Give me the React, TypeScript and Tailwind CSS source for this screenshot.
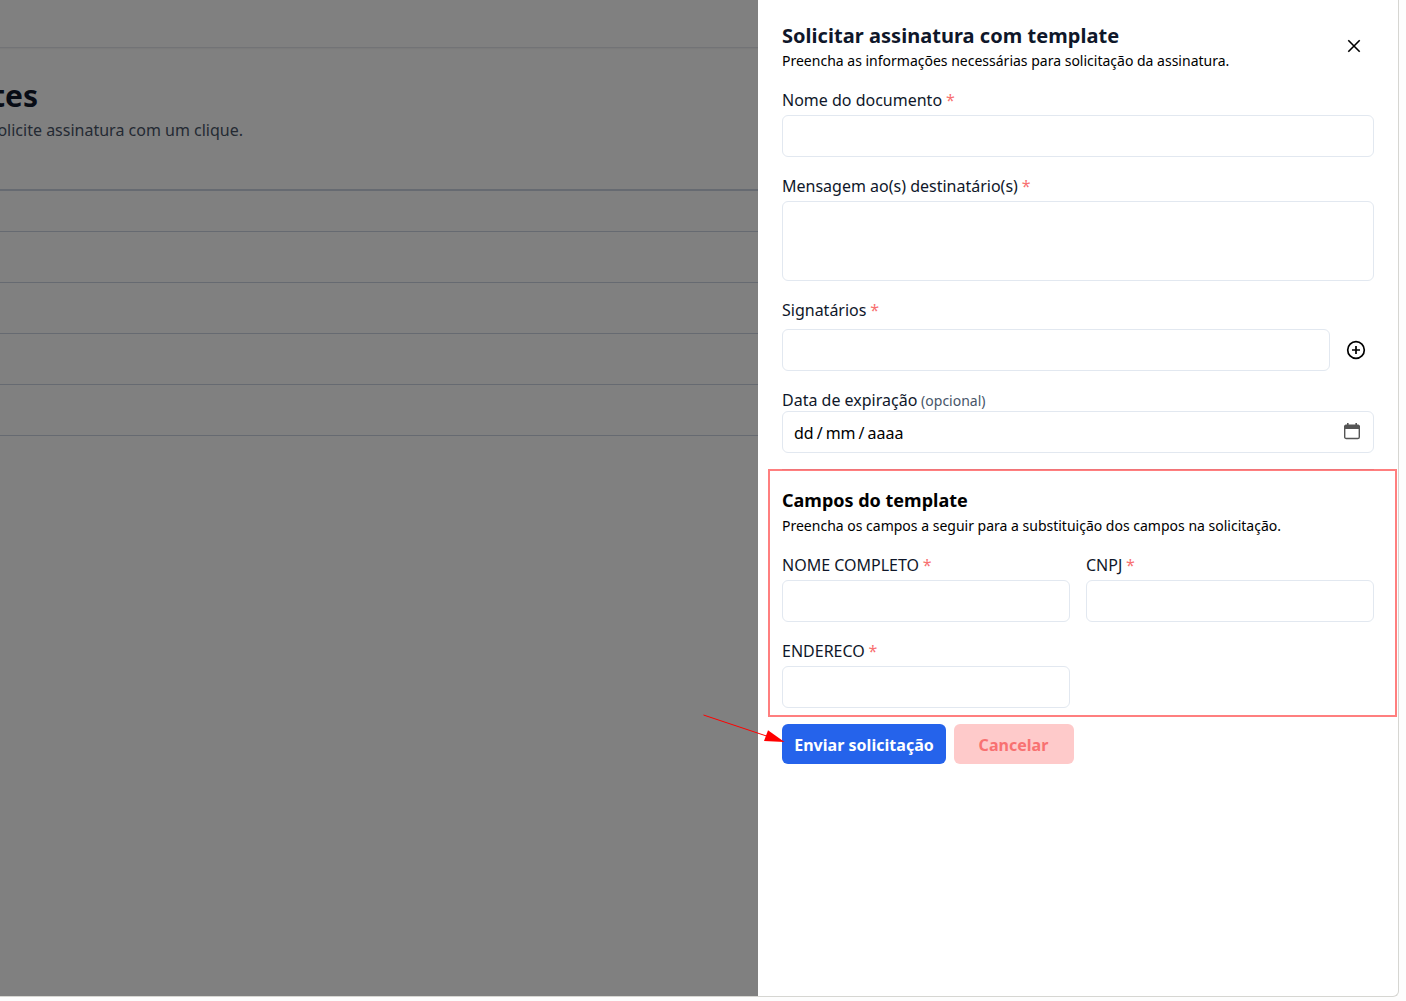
import React from 'react';

const inputBase = 'block w-full rounded-md border border-[#e2e8f0] bg-white outline-none';

function Label({ text }: { text: string }) {
  return (
    <label className="mb-[3px] block h-6 leading-6 text-[#0f172a]">
      {text} <span className="-ml-[0.4px] text-[#f87171]">*</span>
    </label>
  );
}

function Field({ text }: { text: string }) {
  return (
    <div>
      <Label text={text} />
      <input className={`${inputBase} h-[42px]`} />
    </div>
  );
}

function Background() {
  return (
    <div className="flex min-w-0 flex-1 flex-col overflow-hidden whitespace-nowrap bg-[#808080]">
      <div className="h-12 shrink-0 border-b border-[#727376] shadow-[0_1px_1px_rgba(0,0,0,0.04)]" />
      <div className="h-[141px] shrink-0 pt-[30px]">
        <div className="flex w-[38px] justify-end">
          <h1 className="text-[30px] font-bold leading-9 text-[#080c15]">tes</h1>
        </div>
        <div className="mt-1 flex w-[243px] justify-end">
          <p className="leading-6 text-[#242a33]">olicite assinatura com um clique.</p>
        </div>
      </div>
      <div className="h-[43px] shrink-0 border-b border-t-2 border-[#666a71]" />
      <div className="h-[51px] shrink-0 border-b border-[#666a71]" />
      <div className="h-[51px] shrink-0 border-b border-[#666a71]" />
      <div className="h-[51px] shrink-0 border-b border-[#666a71]" />
      <div className="h-[51px] shrink-0 border-b border-[#666a71]" />
    </div>
  );
}

function CalendarIcon() {
  return (
    <svg className="-mt-0.5" width="16" height="17" viewBox="0 0 16 17" fill="none" aria-hidden="true">
      <rect x="0.7" y="2.7" width="14.6" height="12.8" rx="1.6" stroke="#555" strokeWidth="1.4" />
      <path d="M1.5 1.5h13l1.5 1.5v3H0V3z" fill="#555" />
      <path d="M3 0h1.6v3H3zM11.4 0H13v3h-1.6z" fill="#555" />
    </svg>
  );
}

export default function App() {
  return (
    <div className="h-[1001px] w-[1406px] overflow-hidden bg-[#fdfdfd] font-['Noto_Sans',sans-serif] text-base text-black">
      <div className="flex h-[997px] w-[1399px] overflow-hidden rounded-br-md border-b border-r border-[#d6d6d2] bg-white">
        <Background />
        <aside className="w-[640px] shrink-0 px-6 pt-[22px]">
          <header className="flex h-[66px] items-start justify-between">
            <div>
              <h2 className="text-xl font-bold leading-7 tracking-[0.04px] text-[#0f172a]">Solicitar assinatura com template</h2>
              <p className="mt-px text-sm">Preencha as informações necessárias para solicitação da assinatura.</p>
            </div>
            <button className="mr-1 mt-2 flex size-8 items-center justify-center" aria-label="Fechar">
              <svg width="14" height="14" viewBox="0 0 14 14" stroke="black" strokeWidth="1.6" aria-hidden="true">
                <path d="M1.3 1.3l11.4 11.4M12.7 1.3L1.3 12.7" />
              </svg>
            </button>
          </header>
          <div className="mr-2 w-[592px]">
            <Field text="Nome do documento" />
            <div className="mt-[17px]">
              <Label text="Mensagem ao(s) destinatário(s)" />
              <textarea className={`${inputBase} h-20 resize-none`} />
            </div>
            <div className="mt-[17px]">
              <Label text="Signatários" />
              <div className="mt-[7px] flex items-center">
                <input className={`${inputBase} h-[42px] flex-1`} />
                <button className="ml-4 mr-2 flex size-5 shrink-0 items-center justify-center" aria-label="Adicionar">
                  <svg width="20" height="20" viewBox="0 0 20 20" fill="none" stroke="black" strokeWidth="1.7" aria-hidden="true">
                    <circle cx="10" cy="10" r="8.3" />
                    <path d="M10 6v8M6 10h8" />
                  </svg>
                </button>
              </div>
            </div>
            <div className="mt-[17px]">
              <label className="block h-[23px] leading-6 text-[#0f172a]">
                Data de expiração <span className="-ml-[0.4px] text-sm text-[#475569]">(opcional)</span>
              </label>
              <div className="flex h-[42px] items-center justify-between rounded-md border border-[#e2e8f0] pl-[11px] pr-[13px]">
                <div className="flex gap-[3px] pt-0.5 leading-6">
                  <span>dd</span>
                  <span>/</span>
                  <span>mm</span>
                  <span>/</span>
                  <span>aaaa</span>
                </div>
                <CalendarIcon />
              </div>
            </div>
            <section className="relative mt-4 border-t border-[#e2e8f0] pt-4">
              <div className="pointer-events-none absolute -left-[14px] -top-px h-[248px] w-[629px] border-2 border-[#ff0000]/50" />
              <h3 className="text-lg font-bold leading-7">Campos do template</h3>
              <p className="mt-0.5 text-sm">Preencha os campos a seguir para a substituição dos campos na solicitação.</p>
              <div className="mt-[17px] grid grid-cols-2 gap-x-4 gap-y-[17px]">
                <Field text="NOME COMPLETO" />
                <Field text="CNPJ" />
                <Field text="ENDERECO" />
              </div>
            </section>
            <div className="relative mt-4 flex gap-2">
              <button className="h-10 w-[164px] rounded-md bg-[#2563eb] pt-0.5 font-bold tracking-[0.03px] text-white">Enviar solicitação</button>
              <button className="h-10 w-[120px] rounded-md bg-[#fecaca] pr-px pt-0.5 font-bold tracking-[0.03px] text-[#f87171]">Cancelar</button>
              <svg className="absolute -left-[80px] -top-[10px]" width="84" height="30" viewBox="702 714 84 30" aria-hidden="true">
                <path d="M703.5 715L768 736.5" stroke="#f00" strokeWidth="1" />
                <path d="M768 730.3L784.5 742L764 741z" fill="#f00" />
              </svg>
            </div>
          </div>
        </aside>
      </div>
    </div>
  );
}
